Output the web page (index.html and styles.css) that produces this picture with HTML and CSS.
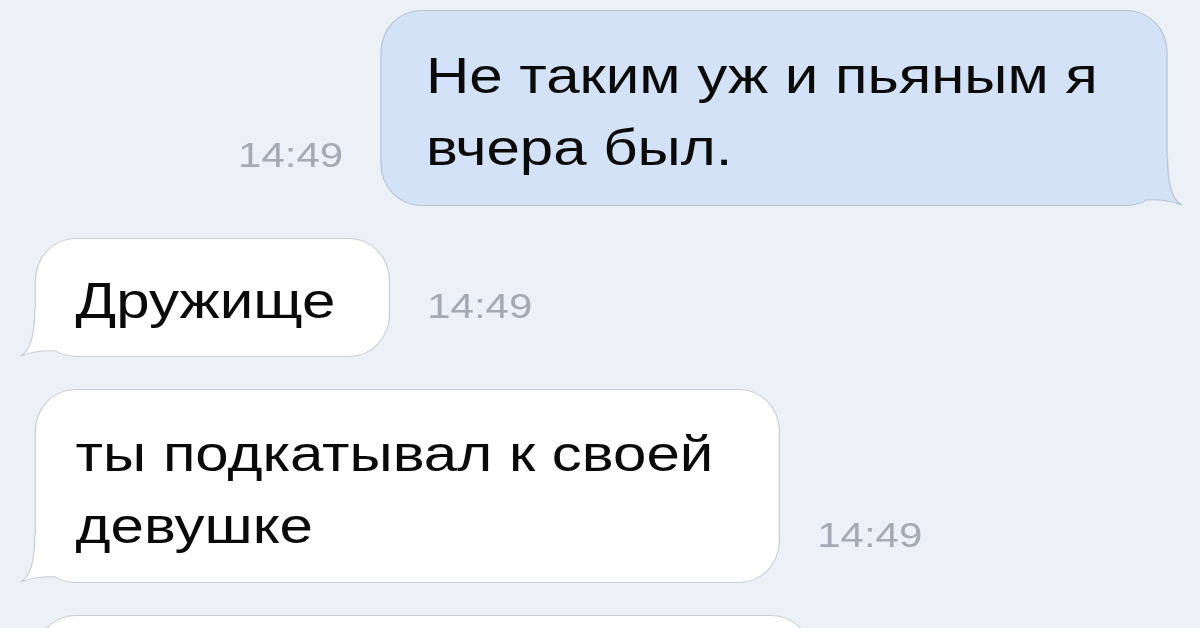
FILE: index.html
```html
<!DOCTYPE html>
<html lang="ru">
<head>
    <meta charset="UTF-8">
    <meta name="viewport" content="width=device-width, initial-scale=1.0">
    <title>Сообщения</title>
    <link rel="stylesheet" href="styles.css">
</head>
<body>
    <div class="chat">
        <div class="row out">
            <span class="time">14:49</span>
            <div class="bubble">
                Не таким уж и пьяным я вчера был.
                <svg class="tail" viewBox="0 0 50 60" aria-hidden="true">
                    <path class="tailFill" d="M14 10 Q14 50 2 57 Q16 51 31 52 L33 10 Z"/>
                    <path class="tailLine" d="M14 10 Q14 50 2 57 Q16 51 31 52"/>
                </svg>
            </div>
        </div>

        <div class="row in">
            <div class="bubble short">
                Дружище
                <svg class="tail" viewBox="0 0 50 60" aria-hidden="true">
                    <path class="tailFill" d="M14 10 Q14 50 2 57 Q16 51 31 52 L33 10 Z"/>
                    <path class="tailLine" d="M14 10 Q14 50 2 57 Q16 51 31 52"/>
                </svg>
            </div>
            <span class="time">14:49</span>
        </div>

        <div class="row in">
            <div class="bubble long">
                ты подкатывал к своей девушке
                <svg class="tail" viewBox="0 0 50 60" aria-hidden="true">
                    <path class="tailFill" d="M14 10 Q14 50 2 57 Q16 51 31 52 L33 10 Z"/>
                    <path class="tailLine" d="M14 10 Q14 50 2 57 Q16 51 31 52"/>
                </svg>
            </div>
            <span class="time time-low">14:49</span>
        </div>

        <div class="row in">
            <div class="bubble next"></div>
        </div>
    </div>
</body>
</html>
```

FILE: styles.css
```css
* {
    margin: 0;
    padding: 0;
    box-sizing: border-box;
}

body {
    width: 100%;
    height: 100vh;
    overflow: hidden;
    background: #ecf0f7;
    font-family: "Liberation Sans", Arial, Helvetica, sans-serif;
    color: #0a0a0a;
}

/* the original capture is stretched sideways, so the whole thread is too */
.chat {
    width: 1000px;
    display: flex;
    flex-direction: column;
    gap: 32px;
    padding: 10px 27px 0 29px;
    transform: scaleX(1.2);
    transform-origin: 0 0;
}

.row {
    display: flex;
    align-items: flex-end;
    gap: 31px;
}

.row.out {
    justify-content: flex-end;
}

.bubble {
    position: relative;
    font-size: 50px;
    line-height: 72px;
    padding: 26px 33px 19px;
    border-radius: 34px / 42px;
    background: #fff;
    border: 1px solid #c8ced8;
}

.out .bubble {
    max-width: 656px;
    padding: 29px 40px 21px 37px;
    background: #d3e2f6;
    border-color: #b7c2d0;
}

.bubble.short {
    width: 296px;
}

.bubble.long {
    max-width: 621px;
    padding: 28px 40px 20px 33px;
}

.bubble.next {
    width: 648px;
    height: 120px;
}

.time {
    font-size: 35px;
    line-height: 1;
    color: #a3aab4;
    margin-bottom: 34px;
}

.time-low {
    margin-bottom: 31px;
}

.tail {
    position: absolute;
    left: -15px;
    bottom: -3px;
    width: 50px;
    height: 60px;
    overflow: visible;
}

.out .tail {
    left: auto;
    right: -15px;
    transform: scaleX(-1);
}

.tailFill {
    fill: #fff;
}

.out .tailFill {
    fill: #d3e2f6;
}

.tailLine {
    fill: none;
    stroke: #c8ced8;
    stroke-width: 1;
}

.out .tailLine {
    stroke: #b7c2d0;
}
```
